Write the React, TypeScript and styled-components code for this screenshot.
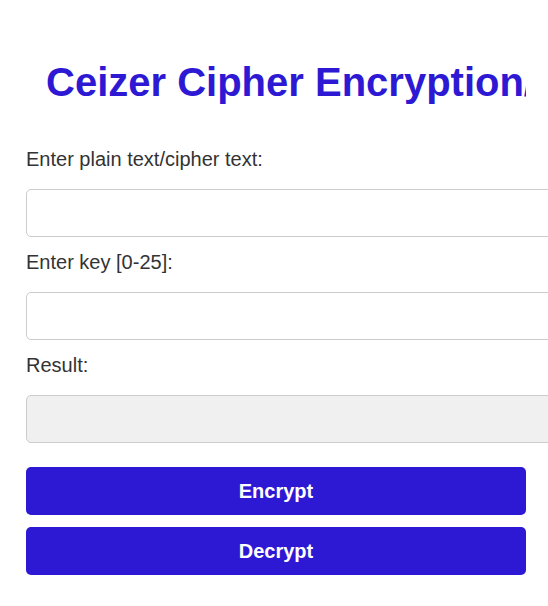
import React, { useState } from "react";
import styled, { createGlobalStyle } from "styled-components";

const GlobalStyle = createGlobalStyle`
  html, body {
    margin: 0;
    padding: 0;
    overflow: hidden;
    background: #ffffff;
    font-family: "Liberation Sans", Arial, sans-serif;
  }
`;

const Page = styled.main`
  padding: 59px 0 0 26px;
  display: flex;
  flex-direction: column;
  align-items: flex-start;
`;

const Title = styled.h1`
  box-sizing: border-box;
  width: 500px;
  margin: 0 0 43px;
  padding: 0 20px;
  font-size: 40px;
  line-height: 46px;
  font-weight: 700;
  color: #2d19d3;
  white-space: nowrap;
  overflow: hidden;
`;

const Field = styled.div`
  display: flex;
  flex-direction: column;
  margin-bottom: 14px;
`;

const Label = styled.label`
  font-size: 20px;
  line-height: 23px;
  color: #333333;
  margin-bottom: 18px;
`;

const Input = styled.input<{ $readOnly?: boolean }>`
  box-sizing: border-box;
  width: 540px;
  height: 48px;
  padding: 0 12px;
  border: 1px solid #cccccc;
  border-radius: 5px;
  font-family: "Liberation Sans", Arial, sans-serif;
  font-size: 18px;
  color: #333333;
  background: ${(p) => (p.$readOnly ? "#f0f0f0" : "#ffffff")};
  outline: none;
`;

const Actions = styled.div`
  display: flex;
  flex-direction: column;
  gap: 12px;
  margin-top: 10px;
`;

const Button = styled.button`
  width: 500px;
  height: 48px;
  border: none;
  border-radius: 5px;
  background: #2d19d3;
  color: #ffffff;
  font-family: "Liberation Sans", Arial, sans-serif;
  font-size: 20px;
  font-weight: 700;
  cursor: pointer;
`;

function shift(text: string, key: number) {
  return text.replace(/[a-z]/gi, (ch) => {
    const base = ch <= "Z" ? 65 : 97;
    return String.fromCharCode(((ch.charCodeAt(0) - base + key + 26 * 10) % 26) + base);
  });
}

export default function App() {
  const [text, setText] = useState("");
  const [key, setKey] = useState("");
  const [result, setResult] = useState("");

  const run = (dir: 1 | -1) => {
    const k = parseInt(key, 10);
    if (isNaN(k)) return;
    setResult(shift(text, dir * (k % 26)));
  };

  return (
    <>
      <GlobalStyle />
      <Page>
        <Title>Ceizer Cipher Encryption/Decryption</Title>
        <Field>
          <Label htmlFor="plain">Enter plain text/cipher text:</Label>
          <Input id="plain" value={text} onChange={(e) => setText(e.target.value)} />
        </Field>
        <Field>
          <Label htmlFor="key">Enter key [0-25]:</Label>
          <Input id="key" value={key} onChange={(e) => setKey(e.target.value)} />
        </Field>
        <Field>
          <Label htmlFor="result">Result:</Label>
          <Input id="result" $readOnly readOnly value={result} />
        </Field>
        <Actions>
          <Button onClick={() => run(1)}>Encrypt</Button>
          <Button onClick={() => run(-1)}>Decrypt</Button>
        </Actions>
      </Page>
    </>
  );
}
